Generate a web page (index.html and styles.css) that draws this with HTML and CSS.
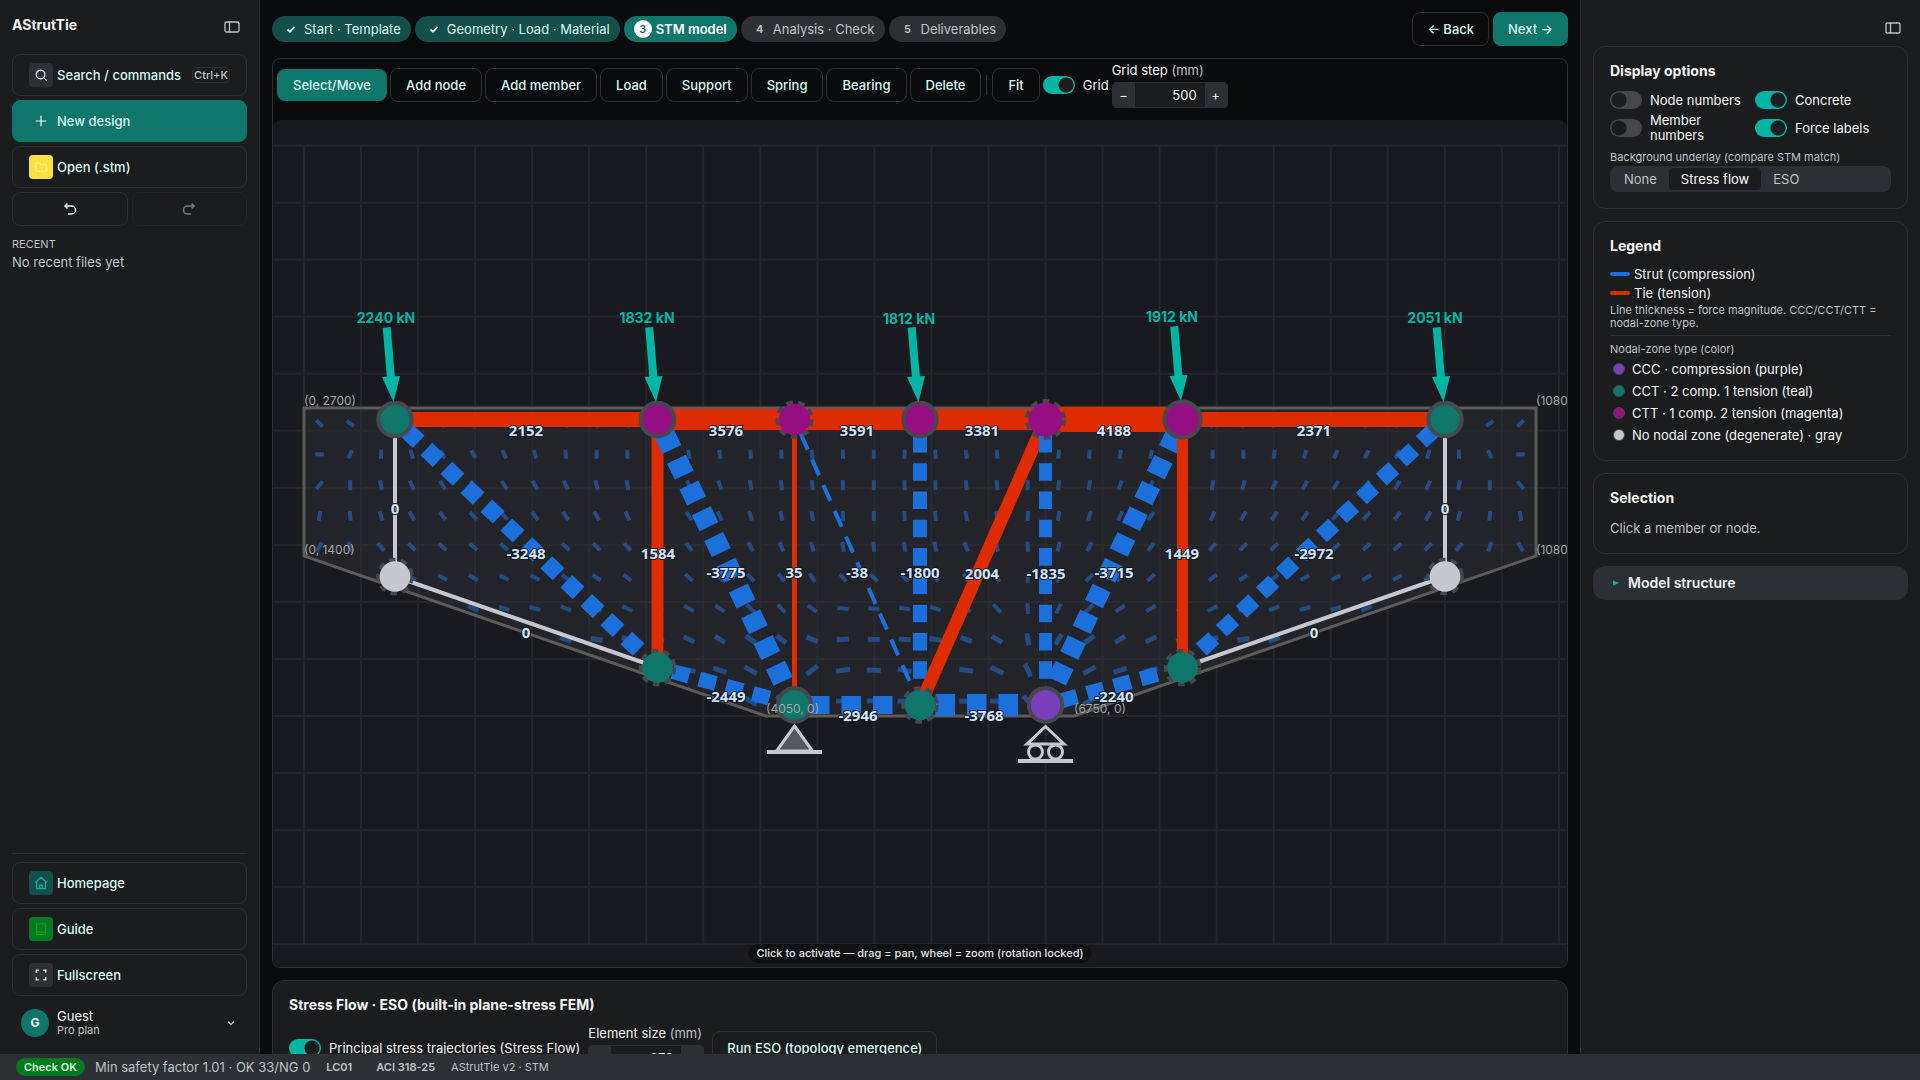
FILE: index.html
```html
<!DOCTYPE html>
<html lang="en">
<head>
<meta charset="utf-8">
<title>AStrutTie</title>
<link rel="stylesheet" href="styles.css">
</head>
<body>
<div class="app">
  <aside class="sidebar">
    <div class="brand-row">
      <h1 class="brand">AStrutTie</h1>
      <button class="icon-button" aria-label="Collapse sidebar">
        <svg class="panel-icon" viewBox="0 0 16 12"><rect x="1" y="1" width="14" height="10" rx="1.5"/><path d="M5.5 1v10"/></svg>
      </button>
    </div>
    <div class="stack">
      <button class="nav-button">
        <span class="nav-icon gray"><svg viewBox="0 0 16 16"><circle cx="7.5" cy="7.5" r="5"/><path d="M11 11l3.500 3.500"/></svg></span>
        <span class="nav-label">Search / commands</span>
        <kbd class="kbd">Ctrl+K</kbd>
      </button>
      <button class="nav-button primary">
        <span class="nav-icon"><svg viewBox="0 0 16 16"><path d="M8 2v12M2 8h12"/></svg></span>
        <span class="nav-label">New design</span>
      </button>
      <button class="nav-button">
        <span class="nav-icon yellow"><svg viewBox="0 0 16 16"><path d="M2 4.500a1.500 1.500 0 0 1 1.500-1.500h2.500l1.500 2h5.500a1.500 1.500 0 0 1 1.500 1.500v5a1.500 1.500 0 0 1-1.500 1.500h-9.500a1.500 1.500 0 0 1-1.500-1.500z"/></svg></span>
        <span class="nav-label">Open (.stm)</span>
      </button>
      <div class="history">
        <button class="history-button" aria-label="Undo"><svg viewBox="0 0 16 16"><path d="M5.500 2.500L3 5l2.500 2.500M3 5h6.500a4 4 0 0 1 0 8H6"/></svg></button>
        <button class="history-button" aria-label="Redo" disabled><svg viewBox="0 0 16 16"><path d="M10.500 2.500L13 5l-2.500 2.500M13 5H6.500a4 4 0 0 0 0 8H10"/></svg></button>
      </div>
    </div>
    <div class="recent">
      <h2 class="recent-title">RECENT</h2>
      <p class="recent-empty">No recent files yet</p>
    </div>
    <div class="sidebar-foot">
      <button class="nav-button">
        <span class="nav-icon teal"><svg viewBox="0 0 16 16"><path d="M1.500 7.500L8 1.500l6.500 6M3 6.500v8h10v-8M6.500 14.500v-4h3v4"/></svg></span>
        <span class="nav-label">Homepage</span>
      </button>
      <button class="nav-button">
        <span class="nav-icon green"><svg viewBox="0 0 16 16"><path d="M3 2h10v12.500H3zM3 11.500h10"/></svg></span>
        <span class="nav-label">Guide</span>
      </button>
      <button class="nav-button">
        <span class="nav-icon gray"><svg viewBox="0 0 16 16"><path d="M2.500 5.500v-3h3M10.500 2.500h3v3M13.500 10.500v3h-3M5.500 13.500h-3v-3"/></svg></span>
        <span class="nav-label">Fullscreen</span>
      </button>
      <button class="account">
        <span class="avatar">G</span>
        <span class="account-text"><span class="account-name">Guest</span><span class="account-plan">Pro plan</span></span>
        <svg class="chevron" viewBox="0 0 14 14"><path d="M4 5.500l3 3 3-3"/></svg>
      </button>
    </div>
  </aside>

  <main class="main">
    <header class="top">
      <nav class="steps">
        <a class="step done" href="#"><span class="step-mark"><svg viewBox="0 0 18 18"><path d="M5.500 9.500l2.500 2.300 4.500-5"/></svg></span>Start · Template</a>
        <a class="step done" href="#"><span class="step-mark"><svg viewBox="0 0 18 18"><path d="M5.500 9.500l2.500 2.300 4.500-5"/></svg></span>Geometry · Load · Material</a>
        <a class="step current" href="#"><span class="step-mark">3</span>STM model</a>
        <a class="step" href="#"><span class="step-mark">4</span>Analysis · Check</a>
        <a class="step" href="#"><span class="step-mark">5</span>Deliverables</a>
      </nav>
      <div class="top-actions">
        <button class="button">← Back</button>
        <button class="button solid">Next →</button>
      </div>
    </header>

    <section class="editor">
      <div class="toolbar">
        <button class="button tool-active">Select/Move</button>
        <button class="button">Add node</button>
        <button class="button">Add member</button>
        <button class="button">Load</button>
        <button class="button">Support</button>
        <button class="button">Spring</button>
        <button class="button">Bearing</button>
        <button class="button">Delete</button>
        <span class="separator"></span>
        <button class="button">Fit</button>
        <label class="switch"><input type="checkbox" checked><span>Grid</span></label>
        <div class="field">
          <label for="grid-step">Grid step <span class="unit">(mm)</span></label>
          <div class="stepper"><button aria-label="Decrease grid step">−</button><input id="grid-step" type="text" value="500"><button aria-label="Increase grid step">+</button></div>
        </div>
      </div>
      <div class="canvas">
        <svg class="drawing" viewBox="273 120 1294 847">
          <defs>
            <g id="load"><path class="load-shaft" d="M-8.300-91.600L-4-41"/><path class="load-head" d="M-13-42L5-43L-1.500-17z"/></g>
          </defs>
          <g id="grid" class="grid"></g>
          <path class="concrete" d="M304 408H1536V556L1074 716H766L304 556Z"/>
          <g id="stress" class="stress"></g>

          <g class="tie">
            <path stroke-width="15" d="M395 419.500H657.500M1182.500 419.500H1445"/>
            <path stroke-width="21" d="M657.500 419.500H1045.500"/>
          </g>
          <g class="zero"><path d="M395 419.500V576.500L657.500 667.500M1182.500 667.500L1445 576.500V419.500"/></g>
          <g id="struts-under" class="strut"></g>
          <g class="tie">
            <path stroke-width="25" d="M1045.500 419.500H1182.500"/>
            <path stroke-width="12" d="M657.500 419.500V667.500"/>
            <path stroke-width="11" d="M1182.500 419.500V667.500"/>
            <path stroke-width="5" d="M794.500 419.500V705"/>
            <path stroke-width="13" d="M1045.500 419.500L920 705"/>
          </g>
          <g id="struts-over" class="strut"></g>

          <g class="loads">
            <use href="#load" x="395" y="419"/><use href="#load" x="657.500" y="419"/><use href="#load" x="920" y="419"/><use href="#load" x="1182.500" y="418"/><use href="#load" x="1445" y="419"/>
          </g>
          <g class="supports">
            <path class="pin" d="M794.500 726L812.500 751H776.500Z"/>
            <path class="ground" d="M767 752H822M1018 761H1073"/>
            <path class="roller" d="M1045.500 726.500L1064 744H1027Z"/>
            <circle cx="1035.500" cy="752" r="7"/><circle cx="1055.500" cy="752" r="7"/>
          </g>
          <g class="nodes">
            <circle class="cct fixed" cx="395" cy="419.500" r="16.700"/>
            <circle class="ctt fixed" cx="657.500" cy="419.500" r="16.700"/>
            <circle class="ctt free" cx="794.500" cy="419.500" r="15.700"/>
            <circle class="ctt fixed" cx="920" cy="419.500" r="16.700"/>
            <circle class="ctt free" cx="1045.500" cy="419.500" r="17"/>
            <circle class="ctt fixed" cx="1182.500" cy="419.500" r="18"/>
            <circle class="cct fixed" cx="1445" cy="419.500" r="16.700"/>
            <circle class="none free" cx="395" cy="576.500" r="15.300"/>
            <circle class="cct free" cx="657.500" cy="667.500" r="15.300"/>
            <circle class="cct fixed" cx="794.500" cy="705" r="16.700"/>
            <circle class="cct free" cx="920" cy="705" r="15.300"/>
            <circle class="ccc fixed" cx="1045.500" cy="705" r="16.700"/>
            <circle class="cct free" cx="1182.500" cy="667.500" r="15.300"/>
            <circle class="none free" cx="1445" cy="576.500" r="15.300"/>
          </g>
          <g class="coords">
            <text x="304" y="405">(0, 2700)</text><text x="304" y="554">(0, 1400)</text>
            <text x="766" y="713">(4050, 0)</text><text x="1074" y="713">(6750, 0)</text>
            <text x="1536" y="405">(10800, 2700)</text><text x="1536" y="554">(10800, 1400)</text>
          </g>
          <g class="load-labels">
            <text x="386" y="323">2240 kN</text><text x="647" y="323">1832 kN</text><text x="909" y="324">1812 kN</text><text x="1172" y="322">1912 kN</text><text x="1435" y="323">2051 kN</text>
          </g>
          <g class="forces">
            <text x="526" y="436">2152</text><text x="726" y="436">3576</text><text x="857" y="436">3591</text><text x="982" y="436">3381</text><text x="1114" y="436">4188</text><text x="1314" y="436">2371</text>
            <text x="395" y="514">0</text><text x="1445" y="514">0</text>
            <text x="526" y="559">-3248</text><text x="658" y="559">1584</text><text x="1182" y="559">1449</text><text x="1314" y="559">-2972</text>
            <text x="726" y="578">-3775</text><text x="794" y="578">35</text><text x="857" y="578">-38</text><text x="920" y="578">-1800</text><text x="982" y="579">2004</text><text x="1046" y="579">-1835</text><text x="1114" y="578">-3715</text>
            <text x="526" y="638">0</text><text x="1314" y="638">0</text>
            <text x="726" y="702">-2449</text><text x="1114" y="702">-2240</text><text x="858" y="721">-2946</text><text x="984" y="721">-3768</text>
          </g>
        </svg>
        <p class="hint">Click to activate — drag = pan, wheel = zoom (rotation locked)</p>
      </div>
    </section>

    <section class="card flow-card">
      <h2 class="card-title">Stress Flow · ESO (built-in plane-stress FEM)</h2>
      <div class="flow-row">
        <label class="switch"><input type="checkbox" checked><span>Principal stress trajectories (Stress Flow)</span></label>
        <div class="field">
          <label for="element-size">Element size <span class="unit">(mm)</span></label>
          <div class="stepper"><button aria-label="Decrease element size">−</button><input id="element-size" type="text" value="270"><button aria-label="Increase element size">+</button></div>
        </div>
        <button class="button">Run ESO (topology emergence)</button>
      </div>
    </section>
  </main>

  <aside class="inspector">
    <div class="inspector-top">
      <button class="icon-button" aria-label="Collapse panel">
        <svg class="panel-icon" viewBox="0 0 16 12"><rect x="1" y="1" width="14" height="10" rx="1.5"/><path d="M5.5 1v10"/></svg>
      </button>
    </div>
    <section class="card">
      <h2 class="card-title">Display options</h2>
      <div class="options">
        <label class="switch"><input type="checkbox"><span>Node numbers</span></label>
        <label class="switch"><input type="checkbox" checked><span>Concrete</span></label>
        <label class="switch"><input type="checkbox"><span>Member numbers</span></label>
        <label class="switch"><input type="checkbox" checked><span>Force labels</span></label>
      </div>
      <p class="caption">Background underlay (compare STM match)</p>
      <div class="segments">
        <button>None</button><button class="selected">Stress flow</button><button>ESO</button>
      </div>
    </section>
    <section class="card">
      <h2 class="card-title">Legend</h2>
      <ul class="legend lines">
        <li><span class="swatch strut-swatch"></span>Strut (compression)</li>
        <li><span class="swatch tie-swatch"></span>Tie (tension)</li>
      </ul>
      <p class="caption note">Line thickness = force magnitude. CCC/CCT/CTT = nodal-zone type.</p>
      <p class="caption ruled">Nodal-zone type (color)</p>
      <ul class="legend dots">
        <li><span class="dot dot-ccc"></span>CCC · compression (purple)</li>
        <li><span class="dot dot-cct"></span>CCT · 2 comp. 1 tension (teal)</li>
        <li><span class="dot dot-ctt"></span>CTT · 1 comp. 2 tension (magenta)</li>
        <li><span class="dot dot-none"></span>No nodal zone (degenerate) · gray</li>
      </ul>
    </section>
    <section class="card">
      <h2 class="card-title">Selection</h2>
      <p class="muted">Click a member or node.</p>
    </section>
    <button class="disclosure"><svg viewBox="0 0 8 8"><path d="M1 1.500L7 4 1 6.500z"/></svg>Model structure</button>
  </aside>

  <footer class="status">
    <span class="badge">Check OK</span>
    <span class="summary">Min safety factor 1.01 · OK 33/NG 0</span>
    <span class="status-strong">LC01</span>
    <span class="status-strong">ACI 318-25</span>
    <span>AStrutTie v2 · STM</span>
  </footer>
</div>
<script src="script.js"></script>
</body>
</html>
```
FILE: styles.css
```css
* { box-sizing: border-box; }

body {
  margin: 0;
  background: #0a0b0d;
  color: #f4f5f6;
  font: 13px/18px Inter, "Liberation Sans", sans-serif;
}

h1, h2, p, ul { margin: 0; padding: 0; }
ul { list-style: none; }
button, input, kbd { font: inherit; color: inherit; }
button { cursor: pointer; }
a { color: inherit; text-decoration: none; }
svg { display: block; fill: none; stroke: currentColor; }

.app {
  display: grid;
  grid-template: minmax(0, 1fr) 26px / 260px minmax(0, 1fr) 340px;
  height: 100vh;
  overflow: hidden;
}

/* Left sidebar */
.sidebar {
  display: flex;
  flex-direction: column;
  padding: 12px;
  background: #1b1c1e;
  border-right: 1px solid #2c2f33;
}
.brand-row {
  display: flex;
  align-items: center;
  justify-content: space-between;
  height: 30px;
  margin-bottom: 12px;
  padding-right: 7px;
}
.brand { font-size: 14px; font-weight: 700; line-height: 18px; margin-bottom: 4px; }
.icon-button { padding: 0; border: 0; background: none; color: #bfc2c7; }
.panel-icon { width: 16px; height: 12px; stroke-width: 1.3; }

.stack { display: flex; flex-direction: column; gap: 4px; }
.nav-button {
  display: flex;
  align-items: center;
  gap: 4px;
  width: 100%;
  height: 42px;
  padding: 0 16px;
  border: 1px solid #2c2f33;
  border-radius: 8px;
  background: none;
  color: #d7fbf4;
  font-weight: 500;
  text-align: left;
}
.nav-button.primary { background: #0f766c; border-color: #0f766c; }
.nav-label { flex: 1; white-space: nowrap; }
.nav-icon {
  display: grid;
  place-items: center;
  width: 24px;
  height: 24px;
  border-radius: 4px;
  color: #f4f5f6;
}
.nav-icon svg { width: 14px; height: 14px; stroke-width: 1.4; }
.gray { background: #2c2f33; }
.yellow { background: #ffe043; color: #fff07c; }
.teal { background: #144f49; color: #00b5a6; }
.green { background: #037a22; color: #00a80b; }
.kbd {
  padding: 0 1px;
  border: 1px solid #2c2f33;
  border-radius: 4px;
  color: #bfc2c7;
  font-size: 11px;
  line-height: 14px;
}
.history { display: grid; grid-template-columns: 1fr 1fr; gap: 4px; }
.history-button {
  display: grid;
  place-items: center;
  height: 34px;
  padding: 0;
  border: 1px solid #2c2f33;
  border-radius: 8px;
  background: none;
  color: #d7fbf4;
}
.history-button svg { width: 16px; height: 16px; stroke-width: 1.5; }
.history-button:disabled { opacity: .45; }

.recent { margin-top: 9px; color: #bfc2c7; }
.recent-title { font-size: 11px; font-weight: 400; line-height: 18px; }
.sidebar-foot {
  display: flex;
  flex-direction: column;
  gap: 4px;
  margin-top: auto;
  margin-bottom: -4px;
  padding-top: 8px;
  border-top: 1px solid #2c2f33;
}
.account {
  display: flex;
  align-items: center;
  gap: 8px;
  height: 46px;
  padding: 0 8px;
  border: 1px solid transparent;
  background: none;
  text-align: left;
}
.avatar {
  display: grid;
  place-items: center;
  width: 28px;
  height: 28px;
  border-radius: 50%;
  background: #0f766c;
  font-size: 12px;
  font-weight: 700;
}
.account-text { display: flex; flex: 1; flex-direction: column; }
.account-name { line-height: 14px; }
.account-plan { color: #bfc2c7; font-size: 11px; line-height: 14px; }
.chevron { width: 14px; height: 14px; color: #bfc2c7; stroke-width: 1.2; }

/* Shared controls */
.button {
  height: 34px;
  padding: 0 14px;
  border: 1px solid #2c2f33;
  border-radius: 8px;
  background: none;
  color: #d7fbf4;
  font-weight: 500;
  white-space: nowrap;
}
.solid { background: #0f766c; border-color: #0f766c; }
.tool-active { height: 32px; background: #0f766c; border-color: #0f766c; }

.switch { display: flex; align-items: center; gap: 8px; line-height: 15px; }
.switch input {
  appearance: none;
  flex: none;
  width: 32px;
  height: 18px;
  margin: 0;
  border-radius: 9px;
  background: radial-gradient(circle at 9px 9px, #1b1c1e 7px, transparent 8px) #44474c;
}
.switch input:checked {
  background: radial-gradient(circle at 23px 9px, #1b1c1e 7px, transparent 8px) #00b5a6;
}

.field { display: flex; flex-direction: column; gap: 4px; }
.field label { line-height: 16px; }
.unit { color: #bfc2c7; }
.stepper {
  display: flex;
  width: 116px;
  height: 26px;
  border: 1px solid #2c2f33;
  border-radius: 4px;
  overflow: hidden;
}
.stepper button {
  width: 22px;
  padding: 0;
  border: 0;
  background: #2c2f33;
}
.stepper input {
  flex: 1;
  min-width: 0;
  padding: 0 8px;
  border: 0;
  background: #1b1c1e;
  text-align: right;
}

/* Main column */
.main {
  display: flex;
  flex-direction: column;
  gap: 12px;
  padding: 12px;
  overflow: hidden;
}
.top, .steps, .top-actions { display: flex; align-items: center; gap: 4px; }
.top { justify-content: space-between; }
.step {
  display: flex;
  align-items: center;
  gap: 4px;
  height: 26px;
  padding: 0 10px;
  border-radius: 13px;
  background: #2c2f33;
  color: #bfc2c7;
  white-space: nowrap;
}
.step-mark {
  display: grid;
  place-items: center;
  width: 18px;
  height: 18px;
  border-radius: 50%;
  font-size: 11px;
  font-weight: 600;
}
.step-mark svg { width: 18px; height: 18px; stroke-width: 1.8; }
.step.done { background: #144f49; color: #d7fbf4; }
.step.current { background: #0f766c; color: #fff; font-weight: 600; }
.step.current .step-mark { background: #fff; color: #0f766c; }

.editor {
  flex: none;
  border: 1px solid #2c2f33;
  border-radius: 8px;
  overflow: hidden;
}
.toolbar {
  display: flex;
  align-items: center;
  gap: 3px;
  padding: 3px 4px 12px;
}
.toolbar .button { padding: 0 15px; }
.separator { width: 1px; height: 20px; margin: 0 2px; background: #2c2f33; }
.canvas {
  position: relative;
  border-radius: 8px;
  background: #181a1f;
  overflow: hidden;
}
.drawing { width: 100%; aspect-ratio: 1294 / 847; }
.hint {
  position: absolute;
  bottom: 4px;
  left: 50%;
  transform: translateX(-50%);
  padding: 0 8px;
  border-radius: 10px;
  background: #101114;
  color: #e3e4e6;
  font-size: 11px;
  font-weight: 500;
  line-height: 19px;
  white-space: nowrap;
}

/* Strut-and-tie drawing */
.grid { stroke: #24262a; stroke-width: 2; }
.concrete { fill: #2c2e32; fill-opacity: .55; stroke: #5d5b59; stroke-width: 3; }
.stress { stroke: #234c84; }
.tie { stroke: #de2b00; }
.strut { stroke: #1c70db; }
.zero { stroke: #c5c8ce; stroke-width: 4; }
.load-shaft { stroke: #00b5a6; stroke-width: 8; }
.load-head { fill: #00b5a6; stroke: none; }
.supports { stroke: #c5c8ce; stroke-width: 3; }
.pin { fill: #55575c; }
.ground { stroke-width: 4; }
.nodes { stroke: #46484d; stroke-width: 4; }
.free { stroke-width: 7; stroke-dasharray: 6 5; paint-order: stroke; }
.ccc { fill: #7a40bb; }
.cct { fill: #0f766c; }
.ctt { fill: #960f82; }
.none { fill: #c5c8ce; }
.drawing text { stroke: none; }
.coords { fill: #a3a5a8; font-size: 12px; }
.load-labels { fill: #00b5a6; font-size: 14px; font-weight: 700; text-anchor: middle; }
.forces { font: 700 15px "Noto Sans", "Open Sans", sans-serif; text-anchor: middle; }
.drawing .forces text {
  fill: #cfe5ff;
  stroke: #15171c;
  stroke-width: 2;
  stroke-linejoin: round;
  paint-order: stroke;
}

/* Cards */
.card {
  padding: 16px;
  border: 1px solid #2c2f33;
  border-radius: 12px;
  background: #1b1c1e;
}
.card-title { font-size: 14px; font-weight: 700; line-height: 16px; }
.flow-card { flex: none; }
.flow-row { display: flex; align-items: center; gap: 8px; margin-top: 12px; }

/* Right panel */
.inspector {
  display: flex;
  flex-direction: column;
  gap: 12px;
  padding: 12px;
  background: #1b1c1e;
  border-left: 1px solid #2c2f33;
}
.inspector-top {
  display: flex;
  align-items: flex-end;
  justify-content: flex-end;
  height: 22px;
  padding: 0 7px;
}
.options {
  display: grid;
  grid-template-columns: 133px 1fr;
  gap: 0 12px;
  margin-top: 8px;
}
.options .switch { min-height: 26px; }
.options .switch:nth-child(n+3) { min-height: 30px; }
.caption { color: #bfc2c7; font-size: 11px; line-height: 13px; }
.options + .caption { margin-top: 8px; margin-bottom: 2px; }
.segments {
  display: flex;
  padding: 2px;
  border-radius: 8px;
  background: #2c2f33;
}
.segments button {
  height: 22px;
  padding: 0 12px;
  border: 0;
  border-radius: 4px;
  background: none;
  color: #bfc2c7;
}
.segments .selected { background: #1b1c1e; color: #fff; }
.legend li { display: flex; align-items: center; white-space: nowrap; }
.lines { margin-top: 10px; }
.lines li { height: 19px; gap: 4px; }
.swatch { width: 20px; height: 4px; border-radius: 2px; }
.strut-swatch { background: #1c70db; }
.tie-swatch { background: #de2b00; }
.note { margin-top: 2px; }
.ruled { margin-top: 5px; padding-top: 7px; border-top: 1px solid #2c2f33; }
.dots { display: grid; gap: 4px; margin-top: 4px; }
.dots li { height: 18px; padding-left: 3px; gap: 7px; }
.dot { width: 12px; height: 12px; border: 1px solid #46484d; border-radius: 50%; }
.dot-ccc { background: #7a40bb; }
.dot-cct { background: #0f766c; }
.dot-ctt { background: #960f82; }
.dot-none { background: #c5c8ce; }
.muted { margin-top: 13px; color: #bfc2c7; }
.disclosure {
  display: flex;
  align-items: center;
  gap: 8px;
  height: 34px;
  padding: 0 19px;
  border: 0;
  border-radius: 12px;
  background: #2c2f33;
  font-size: 14px;
  font-weight: 600;
}
.disclosure svg { width: 8px; height: 8px; fill: #00b5a6; stroke: none; }

/* Status bar */
.status {
  grid-column: 1 / -1;
  display: flex;
  align-items: center;
  gap: 16px;
  padding: 0 16px;
  background: #2c2f33;
  color: #bfc2c7;
  font-size: 11px;
  white-space: nowrap;
}
.badge {
  margin-right: -6px;
  padding: 0 8px;
  border-radius: 9px;
  background: #037a22;
  color: #d3ffc9;
  font-weight: 600;
}
.summary { font-size: 13px; }
.status-strong { font-weight: 600; }
.status-strong + .status-strong { margin-left: 8px; }
```
FILE: script.js
```js
const NS = "http://www.w3.org/2000/svg";

function line(parent, x1, y1, x2, y2, attrs = {}) {
  const el = document.createElementNS(NS, "line");
  const all = { x1, y1, x2, y2, ...attrs };
  for (const key in all) el.setAttribute(key, all[key]);
  parent.appendChild(el);
}

// 500 mm grid
const grid = document.getElementById("grid");
const STEP = 57.04;
for (let i = 0; i <= 22; i++) line(grid, 304 + i * STEP, 145.5, 304 + i * STEP, 944.5);
for (let j = -10; j <= 4; j++) line(grid, 273, 716 + j * STEP, 1567, 716 + j * STEP);

// Principal compression directions, degrees clockwise from horizontal.
// Each row holds columns 0-24; columns 25-39 mirror columns 14-0.
const _ = null;
const angles = [
  [45, 35, 40, 60, 60, 60, 60, 60, 60, 60, 60, 60, 60, 60, 60, 60, 90, 90, 90, 90, 90, 90, 90, 90, 90],
  [0, -65, 90, 73, 60, 62, 65, 75, 83, 90, 90, 90, 78, 80, 86, 88, 82, 90, 90, 95, 84, 82, 85, 95, 97],
  [-50, 90, 78, 68, 60, 56, 56, 60, 66, 74, 80, 80, 66, 70, 80, 82, 84, 88, 90, 88, 88, 86, 85, 92, 98],
  [-80, 85, 73, 60, 52, 48, 50, 54, 57, 62, 66, 66, 56, 65, 72, 77, 80, 88, 90, 88, 84, 80, 80, 92, 100],
  [-60, 70, 50, 47, 42, 40, 42, 44, 43, 46, 50, 50, 52, 58, 62, 68, 73, 80, 85, 80, 76, 68, 75, 88, 104],
  [_, _, 30, 32, 28, 30, 27, 28, 38, 34, 38, 40, 43, 45, 46, 52, 57, 52, 42, 45, 54, 55, 58, 90, 110],
  [_, _, _, _, _, 22, 16, 16, 22, 28, 28, 30, 30, 34, 42, 48, 35, 5, 3, 10, 18, 35, 48, 86, 115],
  [_, _, _, _, _, _, _, _, 18, 8, 20, 25, 27, 32, 36, 38, 22, -3, 0, 4, 8, 20, 30, 82, 122],
  [_, _, _, _, _, _, _, _, _, _, _, _, 12, 18, 28, 40, -38, -8, 2, 10, 5, 6, 25, 65, 140],
  [_, _, _, _, _, _, _, _, _, _, _, _, _, _, 30, 45, 20, 0, 0, 0, 0, 0, 0, 50, 0]
];
const lengths = [9, 9, 10, 10, 10, 10, 11, 12, 14, 14];
const stress = document.getElementById("stress");
angles.forEach((row, j) => {
  for (let i = 0; i < 40; i++) {
    const angle = i < 25 ? row[i] : row[39 - i] === null ? null : -row[39 - i];
    if (angle === null) continue;
    const x = 319.4 + i * 30.8;
    const y = 423.4 + j * 30.85;
    const dx = Math.cos(angle * Math.PI / 180) * lengths[j] / 2;
    const dy = Math.sin(angle * Math.PI / 180) * lengths[j] / 2;
    line(stress, x - dx, y - dy, x + dx, y + dy, { "stroke-width": j > 6 ? 5 : 4 });
  }
});

// Struts: dashed between node faces, a whole number of periods each
const FACE = 15.5;
function strut(parent, x1, y1, x2, y2, width) {
  const length = Math.hypot(x2 - x1, y2 - y1);
  const ux = (x2 - x1) / length;
  const uy = (y2 - y1) / length;
  const span = length - 2 * FACE;
  const period = span / Math.floor(span / 27);
  line(parent, x1 + ux * FACE, y1 + uy * FACE, x2 - ux * FACE, y2 - uy * FACE, {
    "stroke-width": width,
    "stroke-dasharray": `${period * 0.62} ${period * 0.38}`
  });
}
const under = document.getElementById("struts-under");
const over = document.getElementById("struts-over");
strut(under, 395, 419.5, 657.5, 667.5, 17);
strut(under, 1445, 419.5, 1182.5, 667.5, 16);
strut(under, 1182.5, 419.5, 1045.5, 705, 20);
strut(under, 920, 419.5, 920, 705, 14);
strut(under, 657.5, 667.5, 794.5, 705, 15);
strut(over, 657.5, 419.5, 794.5, 705, 21);
strut(over, 794.5, 419.5, 920, 705, 4);
strut(over, 1045.5, 419.5, 1045.5, 705, 13);
strut(over, 794.5, 705, 920, 705, 18);
strut(over, 920, 705, 1045.5, 705, 22);
strut(over, 1045.5, 705, 1182.5, 667.5, 15);
```
